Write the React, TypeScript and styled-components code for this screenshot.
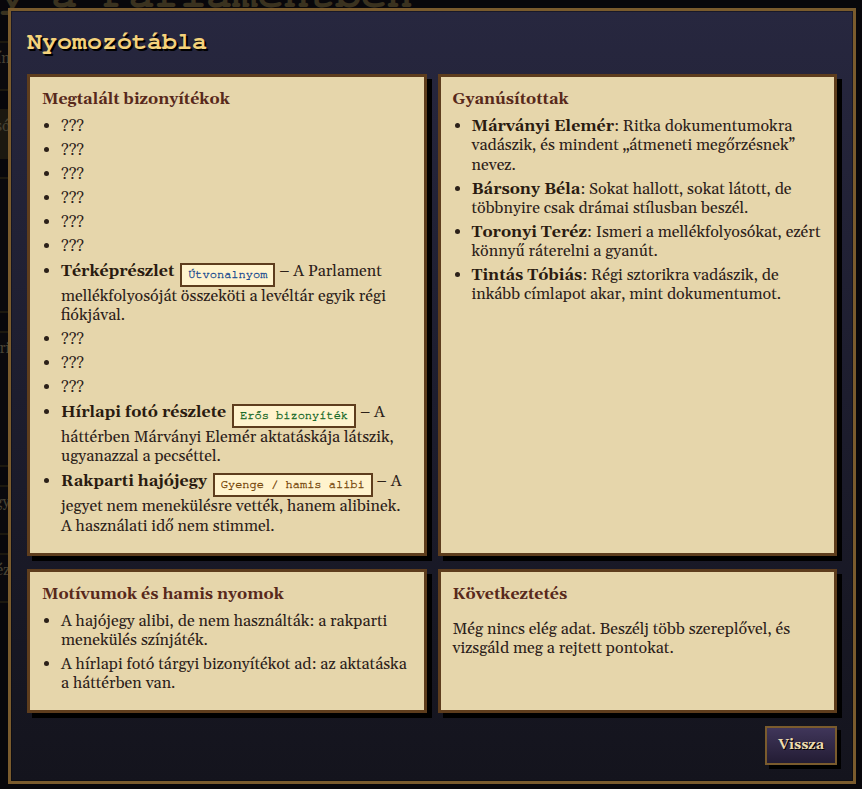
import React from "react";
import styled, { createGlobalStyle } from "styled-components";

const mono = `"Nimbus Mono PS", "Nimbus Mono L", FreeMono, "Courier 10 Pitch", "Liberation Mono", monospace`;
const serif = `Gelasio, "Liberation Serif", serif`;

const GlobalStyle = createGlobalStyle`
  html, body { margin: 0; height: 100%; }
  body {
    background: #0b0a0f;
    font-family: ${serif};
    overflow: hidden;
  }
`;

// the game screen that sits behind the board
const Scene = styled.div`
  height: 100vh;
  overflow: hidden;
  background: #0d0c11;
`;

const SceneTitle = styled.h1`
  margin: -29px 0 0 -155px;
  font: bold 43px/48px ${mono};
  color: #5a4d31;
  white-space: nowrap;
`;

const SceneBody = styled.div`
  display: flex;
  flex-direction: column;
  gap: 18px;
  width: 220px;
  margin: 22px 0 0 -200px;
`;

const SceneCard = styled.div<{ $tall?: boolean; $lit?: boolean }>`
  height: ${p => (p.$tall ? 120 : 34)}px;
  padding: 6px 10px;
  border-top: 2px solid #2c2618;
  border-bottom: 2px solid #2c2618;
  background: ${p => (p.$lit ? "#2a2619" : "#100f14")};
  font: 15px ${serif};
  color: #6d6550;
  text-align: right;
`;

const Overlay = styled.div`
  position: fixed;
  inset: 0;
  padding: 8px 6px 0 8px;
  background: rgba(0, 0, 0, 0.35);
`;

const Modal = styled.section`
  border: 3px solid #7a5b2d;
  padding: 16px;
  background: linear-gradient(180deg, #27273f 0%, #1d1d2e 50%, #14141d 100%);
  box-shadow: inset 0 0 0 1px rgba(0, 0, 0, 0.35);
`;

const Title = styled.h2`
  margin: 0 0 17px;
  font: bold 25px/30px ${mono};
  color: #f4d27b;
  text-shadow: 2px 2px 0 #000;
`;

const Board = styled.div`
  display: grid;
  grid-template-columns: 1fr 1fr;
  column-gap: 11px;
  row-gap: 13px;
`;

const Panel = styled.div`
  padding: 13px 12px 12px;
  border: 3px solid #5e3d1d;
  background: #e6d6ab;
  box-shadow: 5px 5px 0 #000;
  color: #2c2119;
  font-size: 16px;
  line-height: 1.2;

  p {
    margin: 16px 0;
  }
`;

const PanelTitle = styled.h3`
  margin: 0 0 8px;
  font-size: 16px;
  font-weight: bold;
  color: #58291b;
`;

const List = styled.ul`
  margin: 0;
  padding-left: 19px;
`;

const Item = styled.li`
  margin-bottom: 0.3em;
  strong { color: #2a1b10; }
`;

type Tone = "route" | "strong" | "weak";

const toneColor: Record<Tone, string> = {
  route: "#1f4f90",
  strong: "#1d6b2b",
  weak: "#7a4c10",
};

const Tag = styled.span<{ $tone: Tone }>`
  display: inline-block;
  margin: 2px 0 0 2px;
  padding: 3px 6px 5px;
  vertical-align: -2px;
  border: 2px solid #5e3d1d;
  background: #fff3cd;
  font: 12px ${mono};
  color: ${p => toneColor[p.$tone]};
  -webkit-text-stroke: 0.35px currentColor;
`;

const Footer = styled.div`
  display: flex;
  justify-content: flex-end;
  margin-top: 13px;
`;

const BackButton = styled.button`
  padding: 9px 11px;
  border: 2px solid #7a5b2d;
  background: linear-gradient(180deg, #40365a, #231c34);
  box-shadow: 4px 4px 0 #000;
  font: bold 14px/17px ${serif};
  color: #eedcae;
  text-shadow: 1px 1px 0 #000;
  cursor: pointer;
`;

type Clue = { name?: string; tag?: string; tone?: Tone; text?: string };

const clues: Clue[] = [
  {}, {}, {}, {}, {}, {},
  {
    name: "Térképrészlet",
    tag: "Útvonalnyom",
    tone: "route",
    text: "– A Parlament mellékfolyosóját összeköti a levéltár egyik régi fiókjával.",
  },
  {}, {}, {},
  {
    name: "Hírlapi fotó részlete",
    tag: "Erős bizonyíték",
    tone: "strong",
    text: "– A háttérben Márványi Elemér aktatáskája látszik, ugyanazzal a pecséttel.",
  },
  {
    name: "Rakparti hajójegy",
    tag: "Gyenge / hamis alibi",
    tone: "weak",
    text: "– A jegyet nem menekülésre vették, hanem alibinek. A használati idő nem stimmel.",
  },
];

const suspects = [
  { name: "Márványi Elemér", note: "Ritka dokumentumokra vadászik, és mindent „átmeneti megőrzésnek” nevez." },
  { name: "Bársony Béla", note: "Sokat hallott, sokat látott, de többnyire csak drámai stílusban beszél." },
  { name: "Toronyi Teréz", note: "Ismeri a mellékfolyosókat, ezért könnyű ráterelni a gyanút." },
  { name: "Tintás Tóbiás", note: "Régi sztorikra vadászik, de inkább címlapot akar, mint dokumentumot." },
];

const motives = [
  "A hajójegy alibi, de nem használták: a rakparti menekülés színjáték.",
  "A hírlapi fotó tárgyi bizonyítékot ad: az aktatáska a háttérben van.",
];

export default function App() {
  return (
    <>
      <GlobalStyle />
      <Scene>
        <SceneTitle>Rejtély a Parlamentben</SceneTitle>
        <SceneBody>
          <SceneCard>Helyszín</SceneCard>
          <SceneCard $lit>Folyosó</SceneCard>
          <SceneCard $tall />
          <SceneCard $tall>Levéltári</SceneCard>
          <SceneCard>Rakpart, hajójegy</SceneCard>
          <SceneCard>Toronyi Teréz</SceneCard>
        </SceneBody>
      </Scene>
      <Overlay>
        <Modal>
          <Title>Nyomozótábla</Title>
          <Board>
            <Panel>
              <PanelTitle>Megtalált bizonyítékok</PanelTitle>
              <List>
                {clues.map((c, i) =>
                  c.name ? (
                    <Item key={i}>
                      <strong>{c.name}</strong> <Tag $tone={c.tone!}>{c.tag}</Tag> {c.text}
                    </Item>
                  ) : (
                    <Item key={i}>???</Item>
                  )
                )}
              </List>
            </Panel>
            <Panel>
              <PanelTitle>Gyanúsítottak</PanelTitle>
              <List>
                {suspects.map(s => (
                  <Item key={s.name}>
                    <strong>{s.name}</strong>: {s.note}
                  </Item>
                ))}
              </List>
            </Panel>
            <Panel>
              <PanelTitle>Motívumok és hamis nyomok</PanelTitle>
              <List>
                {motives.map(m => (
                  <Item key={m}>{m}</Item>
                ))}
              </List>
            </Panel>
            <Panel>
              <PanelTitle>Következtetés</PanelTitle>
              <p>Még nincs elég adat. Beszélj több szereplővel, és vizsgáld meg a rejtett pontokat.</p>
            </Panel>
          </Board>
          <Footer>
            <BackButton>Vissza</BackButton>
          </Footer>
        </Modal>
      </Overlay>
    </>
  );
}
